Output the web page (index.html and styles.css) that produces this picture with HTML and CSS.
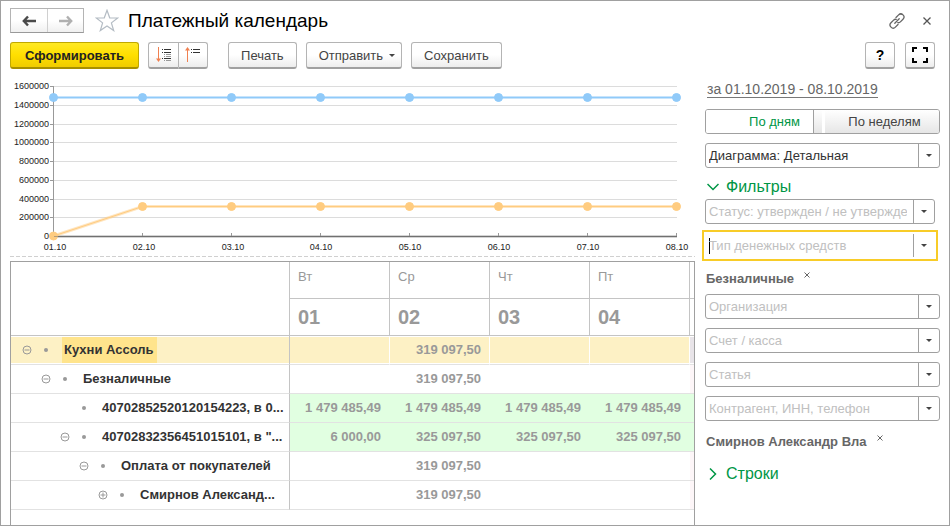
FILE: index.html
```
<!DOCTYPE html>
<html lang="ru">
<head>
  <meta charset="UTF-8">
  <meta name="viewport" content="width=device-width, initial-scale=1.0">
  <title>Платежный календарь</title>
  <link rel="stylesheet" href="styles.css">
</head>
<body>
  <div class="window">
    <header class="titlebar">
      <div class="nav">
        <button type="button" class="nav-button" aria-label="Назад">
          <svg width="14" height="12" viewBox="0 0 14 12"><path d="M6 1.500L1.800 6L6 10.500M2 6H14" fill="none" stroke="#4a4a4a" stroke-width="2.400"/></svg>
        </button>
        <button type="button" class="nav-button" aria-label="Вперед">
          <svg width="14" height="12" viewBox="0 0 14 12"><path d="M8 1.500L12.200 6L8 10.500M12 6H0" fill="none" stroke="#b0b0b0" stroke-width="2.400"/></svg>
        </button>
      </div>
      <button type="button" class="icon-button" aria-label="В избранное">
        <svg width="24" height="23" viewBox="0 0 24 23"><path d="M12 1.300L14.700 8.800L22.700 9L16.400 13.900L18.700 21.600L12 17L5.300 21.600L7.600 13.900L1.300 9L9.300 8.800Z" fill="#fff" stroke="#b4bcc4" stroke-width="1.200"/></svg>
      </button>
      <h1 class="title">Платежный календарь</h1>
      <div class="window-actions">
        <button type="button" class="icon-button" aria-label="Получить ссылку">
          <svg width="16" height="16" viewBox="0 0 16 16" fill="none" stroke="#666" stroke-width="1.300" stroke-linecap="round"><path d="M7 4.500L9.600 1.900A2.900 2.900 0 0 1 14 6.300L11.400 8.900A2.900 2.900 0 0 1 8.800 9.700"/><path d="M9 11.500L6.400 14.100A2.900 2.900 0 0 1 2 9.700L4.600 7.100A2.900 2.900 0 0 1 7.200 6.300"/><path d="M5.800 10.200L10.200 5.800"/></svg>
        </button>
        <button type="button" class="icon-button" aria-label="Закрыть">
          <svg width="8" height="8" viewBox="0 0 8 8"><path d="M0.500 0.500L7.500 7.500M7.500 0.500L0.500 7.500" stroke="#555" stroke-width="1.300"/></svg>
        </button>
      </div>
    </header>

    <div class="toolbar">
      <button type="button" class="button button-primary">Сформировать</button>
      <div class="button-group">
        <button type="button" class="button button-icon" aria-label="Развернуть группы">
          <svg width="16" height="16" viewBox="0 0 16 16"><path d="M2.500 0V14" stroke="#f08050"/><path d="M0 11.500H5L2.500 15Z" fill="#f08050"/><path d="M6 2.500H7M8 2.500H15M6 5.500H7M8 5.500H15" stroke="#333"/><path d="M8 7.500H9M10 7.500H15M8 9.500H9M10 9.500H15M8 13.500H9M10 13.500H15" stroke="#999"/><path d="M6 11.500H7M8 11.500H15" stroke="#333"/></svg>
        </button>
        <button type="button" class="button button-icon" aria-label="Свернуть группы">
          <svg width="16" height="16" viewBox="0 0 16 16"><path d="M2.500 1V15" stroke="#f08050"/><path d="M0 3.500H5L2.500 0Z" fill="#f08050"/><path d="M6 2.500H7M8 2.500H15M6 5.500H7M8 5.500H15" stroke="#333"/></svg>
        </button>
      </div>
      <button type="button" class="button">Печать</button>
      <button type="button" class="button button-menu">Отправить <span class="arrow"></span></button>
      <button type="button" class="button">Сохранить</button>
      <button type="button" class="button button-square button-help">?</button>
      <button type="button" class="button button-square" aria-label="Во весь экран">
        <svg width="16" height="16" viewBox="0 0 16 16"><path d="M1 5V1H5M11 1H15V5M15 11V15H11M5 15H1V11" fill="none" stroke="#000" stroke-width="2"/></svg>
      </button>
    </div>

    <div class="content">
      <main class="report">
        <svg class="chart" viewBox="10 78 685 176" role="img" aria-label="Остатки по дням">
          <path class="chart-grid" d="M54 86.500H677M54 105.500H677M54 124.500H677M54 142.500H677M54 161.500H677M54 180.500H677M54 199.500H677M54 217.500H677"/>
          <path class="chart-base-shade" d="M54 236.500H677"/>
          <path class="chart-axis" d="M53.500 86V236M50 86.500H54M50 105.500H54M50 124.500H54M50 142.500H54M50 161.500H54M50 180.500H54M50 199.500H54M50 217.500H54M50 236.500H54M142.500 233V236M231.500 233V236M320.500 233V236M409.500 233V236M498.500 233V236M587.500 233V236M676.500 233V236"/>
          <path class="chart-base" d="M54 236.500H677"/>
          <g class="chart-values">
            <text x="49" y="89">1600000</text>
            <text x="49" y="108">1400000</text>
            <text x="49" y="127">1200000</text>
            <text x="49" y="145">1000000</text>
            <text x="49" y="164">800000</text>
            <text x="49" y="183">600000</text>
            <text x="49" y="202">400000</text>
            <text x="49" y="220">200000</text>
            <text x="49" y="239">0</text>
          </g>
          <g class="chart-dates">
            <text x="55" y="250">01.10</text>
            <text x="144" y="250">02.10</text>
            <text x="233" y="250">03.10</text>
            <text x="321" y="250">04.10</text>
            <text x="410" y="250">05.10</text>
            <text x="499" y="250">06.10</text>
            <text x="588" y="250">07.10</text>
            <text x="677" y="250">08.10</text>
          </g>
          <g class="series series-blue">
            <path class="series-halo" d="M53.500 97.500H676.500"/>
            <path class="series-line" d="M53.500 97.500H676.500"/>
            <circle cx="53.500" cy="97.500" r="4"/>
            <circle cx="142.500" cy="97.500" r="4"/>
            <circle cx="231.500" cy="97.500" r="4"/>
            <circle cx="320.500" cy="97.500" r="4"/>
            <circle cx="409.500" cy="97.500" r="4"/>
            <circle cx="498.500" cy="97.500" r="4"/>
            <circle cx="587.500" cy="97.500" r="4"/>
            <circle cx="676.500" cy="97.500" r="4"/>
          </g>
          <g class="series series-orange">
            <path class="series-halo" d="M53.500 236L142.500 206.500H676.500"/>
            <path class="series-line" d="M53.500 236L142.500 206.500H676.500"/>
            <circle cx="53.500" cy="236" r="4"/>
            <circle cx="142.500" cy="206.500" r="4"/>
            <circle cx="231.500" cy="206.500" r="4"/>
            <circle cx="320.500" cy="206.500" r="4"/>
            <circle cx="409.500" cy="206.500" r="4"/>
            <circle cx="498.500" cy="206.500" r="4"/>
            <circle cx="587.500" cy="206.500" r="4"/>
            <circle cx="676.500" cy="206.500" r="4"/>
          </g>
          <path class="chart-over" d="M54 236.500H58"/>
        </svg>

        <div class="splitter"></div>

        <div class="table-box">
          <table class="calendar">
            <colgroup>
              <col class="col-name">
              <col class="col-day">
              <col class="col-day">
              <col class="col-day">
              <col class="col-day">
              <col>
            </colgroup>
            <thead>
              <tr class="weekdays">
                <td rowspan="2"></td>
                <th>Вт</th>
                <th>Ср</th>
                <th>Чт</th>
                <th>Пт</th>
                <td></td>
              </tr>
              <tr class="days">
                <th>01</th>
                <th>02</th>
                <th>03</th>
                <th>04</th>
                <td></td>
              </tr>
            </thead>
            <tbody>
              <tr class="selected">
                <th>
                  <div class="node">
                    <button type="button" class="toggle" aria-label="Свернуть"><svg width="10" height="10" viewBox="0 0 10 10"><circle cx="5" cy="5" r="4"/><path d="M2.500 5H7.500"/></svg></button>
                    <span class="bullet"></span>
                    <span class="name">Кухни Ассоль</span>
                  </div>
                </th>
                <td></td>
                <td>319 097,50</td>
                <td></td>
                <td></td>
                <td class="weekend"></td>
              </tr>
              <tr>
                <th>
                  <div class="node level-1">
                    <button type="button" class="toggle" aria-label="Свернуть"><svg width="10" height="10" viewBox="0 0 10 10"><circle cx="5" cy="5" r="4"/><path d="M2.500 5H7.500"/></svg></button>
                    <span class="bullet"></span>
                    <span class="name">Безналичные</span>
                  </div>
                </th>
                <td></td>
                <td>319 097,50</td>
                <td></td>
                <td></td>
                <td class="weekend"></td>
              </tr>
              <tr class="balance">
                <th>
                  <div class="node level-2">
                    <span class="toggle"></span>
                    <span class="bullet"></span>
                    <span class="name">40702852520120154223, в 0...</span>
                  </div>
                </th>
                <td>1 479 485,49</td>
                <td>1 479 485,49</td>
                <td>1 479 485,49</td>
                <td>1 479 485,49</td>
                <td></td>
              </tr>
              <tr class="balance">
                <th>
                  <div class="node level-2">
                    <button type="button" class="toggle" aria-label="Свернуть"><svg width="10" height="10" viewBox="0 0 10 10"><circle cx="5" cy="5" r="4"/><path d="M2.500 5H7.500"/></svg></button>
                    <span class="bullet"></span>
                    <span class="name">40702832356451015101, в "...</span>
                  </div>
                </th>
                <td>6 000,00</td>
                <td>325 097,50</td>
                <td>325 097,50</td>
                <td>325 097,50</td>
                <td></td>
              </tr>
              <tr>
                <th>
                  <div class="node level-3">
                    <button type="button" class="toggle" aria-label="Свернуть"><svg width="10" height="10" viewBox="0 0 10 10"><circle cx="5" cy="5" r="4"/><path d="M2.500 5H7.500"/></svg></button>
                    <span class="bullet"></span>
                    <span class="name">Оплата от покупателей</span>
                  </div>
                </th>
                <td></td>
                <td>319 097,50</td>
                <td></td>
                <td></td>
                <td class="weekend"></td>
              </tr>
              <tr>
                <th>
                  <div class="node level-4">
                    <button type="button" class="toggle" aria-label="Развернуть"><svg width="10" height="10" viewBox="0 0 10 10"><circle cx="5" cy="5" r="4"/><path d="M2.500 5H7.500M5 2.500V7.500"/></svg></button>
                    <span class="bullet"></span>
                    <span class="name">Смирнов Александ...</span>
                  </div>
                </th>
                <td></td>
                <td>319 097,50</td>
                <td></td>
                <td></td>
                <td class="weekend"></td>
              </tr>
            </tbody>
          </table>
        </div>
      </main>

      <aside class="sidebar">
        <a href="#" class="period">за 01.10.2019 - 08.10.2019</a>

        <div class="switch">
          <button type="button" class="switch-item active">По дням</button>
          <button type="button" class="switch-item">По неделям</button>
        </div>

        <div class="combo">
          <select class="combo-field" aria-label="Вид диаграммы">
            <option>Диаграмма: Детальная</option>
          </select>
          <span class="combo-open"><span class="arrow"></span></span>
        </div>

        <button type="button" class="section">
          <svg width="12" height="12" viewBox="0 0 12 12"><path d="M0.500 3L6 8.500L11.500 3"/></svg>
          Фильтры
        </button>

        <div class="filters">
          <div class="combo combo-short">
            <input class="combo-field" type="text" aria-label="Статус" placeholder="Статус: утвержден / не утвержден">
            <button type="button" class="combo-open" aria-label="Выбрать статус"><span class="arrow"></span></button>
          </div>
          <div class="combo combo-short combo-focused">
            <input class="combo-field" type="text" aria-label="Тип денежных средств" placeholder="Тип денежных средств">
            <button type="button" class="combo-open" aria-label="Выбрать тип"><span class="arrow"></span></button>
          </div>
          <div class="tag">
            <span>Безналичные</span>
            <button type="button" class="tag-remove" aria-label="Убрать"><svg width="6" height="6" viewBox="0 0 6 6"><path d="M0.500 0.500L5.500 5.500M5.500 0.500L0.500 5.500"/></svg></button>
          </div>
          <div class="combo">
            <input class="combo-field" type="text" aria-label="Организация" placeholder="Организация">
            <button type="button" class="combo-open" aria-label="Выбрать организацию"><span class="arrow"></span></button>
          </div>
          <div class="combo">
            <input class="combo-field" type="text" aria-label="Счет / касса" placeholder="Счет / касса">
            <button type="button" class="combo-open" aria-label="Выбрать счет"><span class="arrow"></span></button>
          </div>
          <div class="combo">
            <input class="combo-field" type="text" aria-label="Статья" placeholder="Статья">
            <button type="button" class="combo-open" aria-label="Выбрать статью"><span class="arrow"></span></button>
          </div>
          <div class="combo">
            <input class="combo-field" type="text" aria-label="Контрагент" placeholder="Контрагент, ИНН, телефон">
            <button type="button" class="combo-open" aria-label="Выбрать контрагента"><span class="arrow"></span></button>
          </div>
          <div class="tag">
            <span>Смирнов Александр Вла</span>
            <button type="button" class="tag-remove" aria-label="Убрать"><svg width="6" height="6" viewBox="0 0 6 6"><path d="M0.500 0.500L5.500 5.500M5.500 0.500L0.500 5.500"/></svg></button>
          </div>
        </div>

        <button type="button" class="section section-closed">
          <svg width="12" height="12" viewBox="0 0 12 12"><path d="M3 0.500L8.500 6L3 11.500"/></svg>
          Строки
        </button>
      </aside>
    </div>
  </div>
</body>
</html>
```

FILE: styles.css
```
* {
  box-sizing: border-box;
}

body {
  margin: 0;
  font-family: "Liberation Sans", Arial, sans-serif;
  font-size: 13px;
  color: #333;
  background: #fff;
}

button,
input,
select {
  font: inherit;
  color: inherit;
  margin: 0;
  padding: 0;
  border: 0;
  background: none;
}

button {
  cursor: pointer;
}

svg {
  display: block;
}

.window {
  display: flex;
  flex-direction: column;
  min-height: 100vh;
  padding: 7px 9px 0;
  border: 1px solid #a0a0a0;
}

/* Title bar */
.titlebar {
  display: flex;
  align-items: center;
  height: 25px;
}

.nav {
  display: flex;
  height: 25px;
  margin-right: 11px;
  border: 1px solid #b4b4b4;
  border-bottom-color: #999;
  background: linear-gradient(#fff 50%, #f0f0f0);
}

.nav-button {
  display: flex;
  align-items: center;
  justify-content: center;
  width: 36px;
}

.nav-button + .nav-button {
  border-left: 1px solid #d0d0d0;
}

.title {
  margin: 0 0 0 9px;
  font-size: 19px;
  font-weight: normal;
  line-height: 24px;
  color: #000;
}

.window-actions {
  display: flex;
  align-items: center;
  gap: 18px;
  margin-left: auto;
  margin-right: 9px;
}

/* Toolbar */
.toolbar {
  display: flex;
  gap: 9px;
  margin-top: 9px;
  padding-right: 5px;
}

.button {
  display: flex;
  align-items: center;
  justify-content: center;
  height: 27px;
  padding: 0 12px;
  border: 1px solid #b4b4b4;
  border-bottom: 2px solid #a0a0a0;
  border-radius: 3px;
  background: linear-gradient(#fff 50%, #ededed);
  color: #444;
}

.button-primary {
  padding: 0 14px;
  border-color: #c0a800 #c0a800 #a89000;
  background: linear-gradient(#ffe924, #ffdf00 50%, #f0cc00);
  font-weight: bold;
  color: #222;
}

.button-group {
  display: flex;
  margin-right: 11px;
}

.button-icon {
  width: 30px;
  padding: 0;
}

.button-icon:first-child {
  border-right: 0;
  border-radius: 3px 0 0 3px;
}

.button-icon:last-child {
  border-radius: 0 3px 3px 0;
}

.button-menu {
  gap: 6px;
  padding-right: 6px;
}

.button-square {
  width: 30px;
  padding: 0;
  color: #000;
}

.button-help {
  margin-left: auto;
  margin-right: 1px;
  font-size: 14px;
  font-weight: bold;
}

.arrow {
  width: 0;
  border: 3px solid transparent;
  border-top-color: #444;
  border-bottom: 0;
}

/* Page body */
.content {
  display: grid;
  grid-template-columns: minmax(0, 1fr) 235px;
  gap: 10px;
  flex: 1;
  margin-top: 9px;
}

.report {
  display: flex;
  flex-direction: column;
}

/* Chart */
.chart {
  width: 100%;
  font-size: 9px;
  overflow: visible;
}

.chart-grid {
  stroke: #dcdcdc;
}

.chart-axis {
  stroke: #999;
}

.chart-base-shade {
  stroke: #d4d4d4;
  stroke-width: 3;
}

.chart-base,
.chart-over {
  stroke: #707070;
}

.chart-over {
  opacity: 0.5;
}

.chart-values {
  text-anchor: end;
}

.chart-dates {
  text-anchor: middle;
}

.chart text {
  fill: #222;
}

.series path {
  fill: none;
}

.series-halo {
  stroke-width: 3;
  opacity: 0.5;
}

.series-line {
  stroke-width: 1;
}

.series-blue {
  stroke: #90caf9;
  fill: #90caf9;
}

.series-orange {
  stroke: #ffcc80;
  fill: #ffcc80;
}

.splitter {
  height: 1px;
  margin: 2px 0 4px;
  background: repeating-linear-gradient(90deg, #d0d0d0 0 4px, transparent 4px 6px);
}

/* Calendar table */
.table-box {
  flex: 1;
  border: 1px solid #a0a0a0;
  border-bottom: 0;
  overflow: hidden;
}

.calendar {
  width: 100%;
  table-layout: fixed;
  border-collapse: separate;
  border-spacing: 0;
}

.col-name {
  width: 279px;
}

.col-day {
  width: 100px;
}

.calendar th,
.calendar td {
  padding: 0 8px;
}

.calendar thead th,
.calendar thead td {
  height: 37px;
  border-right: 1px solid #c4c4c4;
  border-bottom: 1px solid #c4c4c4;
  text-align: left;
  color: #999;
}

.calendar thead td:last-child {
  border-right: 0;
}

.calendar .weekdays th {
  padding-bottom: 7px;
  font-weight: normal;
}

.days th {
  font-size: 20px;
}

.calendar tbody th,
.calendar tbody td {
  height: 29px;
  border-bottom: 1px solid #e2e2e2;
  line-height: 16px;
  white-space: nowrap;
}

.calendar tbody th {
  padding: 0;
  border-right: 1px solid #c4c4c4;
  text-align: left;
}

.calendar tbody td {
  padding: 0 9px 0 0;
  font-weight: bold;
  text-align: right;
  color: #999;
}

.calendar .balance td {
  background: #e1ffe1;
}

.calendar .weekend {
  background: #fdf6f8;
}

.calendar .selected th,
.calendar .selected td {
  background: #fdf1c5;
  box-shadow: inset 0 1px #fff, inset 0 -1px #fff;
}

.calendar .selected td {
  border-right: 1px solid #fff;
  padding-right: 8px;
}

.calendar .selected .weekend {
  border-right: 0;
  padding: 0;
  background: #e8e4e8;
}

.calendar .weekend,
.calendar .balance td:last-child {
  padding: 0;
}

.node {
  display: flex;
  align-items: center;
  padding-left: 11px;
}

.level-1 {
  padding-left: 30px;
}

.level-2 {
  padding-left: 49px;
}

.level-3 {
  padding-left: 68px;
}

.level-4 {
  padding-left: 87px;
}

.toggle {
  width: 10px;
  height: 10px;
  fill: none;
  stroke: #999;
}

.bullet {
  width: 4px;
  height: 4px;
  margin: 0 14px 0 12px;
  border-radius: 50%;
  background: #999;
}

.name {
  padding: 5px 2px;
}

.selected .name {
  padding-right: 3px;
  background: #ffe48c;
}

/* Settings panel */
.sidebar {
  padding-bottom: 12px;
}

.period {
  display: inline-block;
  margin: 3px 2px 11px;
  border-bottom: 1px solid #777;
  font-size: 14px;
  line-height: 16px;
  text-decoration: none;
  color: #666;
}

.switch {
  display: flex;
  height: 25px;
  margin-bottom: 9px;
  border: 1px solid #a0a0a0;
  border-radius: 3px;
  overflow: hidden;
}

.switch-item {
  flex: 1;
  padding-left: 16px;
  background: linear-gradient(90deg, transparent 8px, #fff 8px 11px, transparent 11px), linear-gradient(#fff, #e6e6e6);
  color: #444;
}

.switch-item.active {
  flex: 0 0 108px;
  padding-left: 30px;
  border-right: 1px solid #a0a0a0;
  background: #fff;
  color: #009646;
}

.combo {
  display: flex;
  height: 25px;
  border: 1px solid #a0a0a0;
  border-radius: 3px;
  background: #fff;
}

.combo-short {
  margin-right: 5px;
}

.combo-field {
  flex: 1;
  min-width: 0;
  margin: 0 6px 0 3px;
  appearance: none;
  outline: none;
}

.combo-field::placeholder {
  color: #c0c0c0;
  opacity: 1;
}

.combo-open {
  display: flex;
  align-items: center;
  justify-content: center;
  width: 21px;
  border-left: 1px solid #a0a0a0;
}

.combo-focused {
  height: 31px;
  margin: -3px 2px -3px -3px;
  padding: 2px;
  border: 2px solid #f8cc28;
  border-radius: 0;
}

/* text cursor */
.combo-focused .combo-field {
  background: linear-gradient(#000, #000) 0 50% / 1px 16px no-repeat;
}

.section {
  display: flex;
  align-items: center;
  gap: 7px;
  height: 20px;
  margin: 9px 0 2px 2px;
  font-size: 16px;
  color: #009646;
}

.section svg {
  fill: none;
  stroke: #009646;
  stroke-width: 1.5;
}

.section-closed {
  margin-top: 16px;
}

.filters {
  display: flex;
  flex-direction: column;
  gap: 9px;
}

.tag {
  display: flex;
  align-items: flex-start;
  gap: 10px;
  height: 18px;
  padding: 4px 1px 0;
  font-weight: bold;
  line-height: 16px;
  color: #666;
}

.tag-remove {
  height: 8px;
  stroke: #666;
}
```
